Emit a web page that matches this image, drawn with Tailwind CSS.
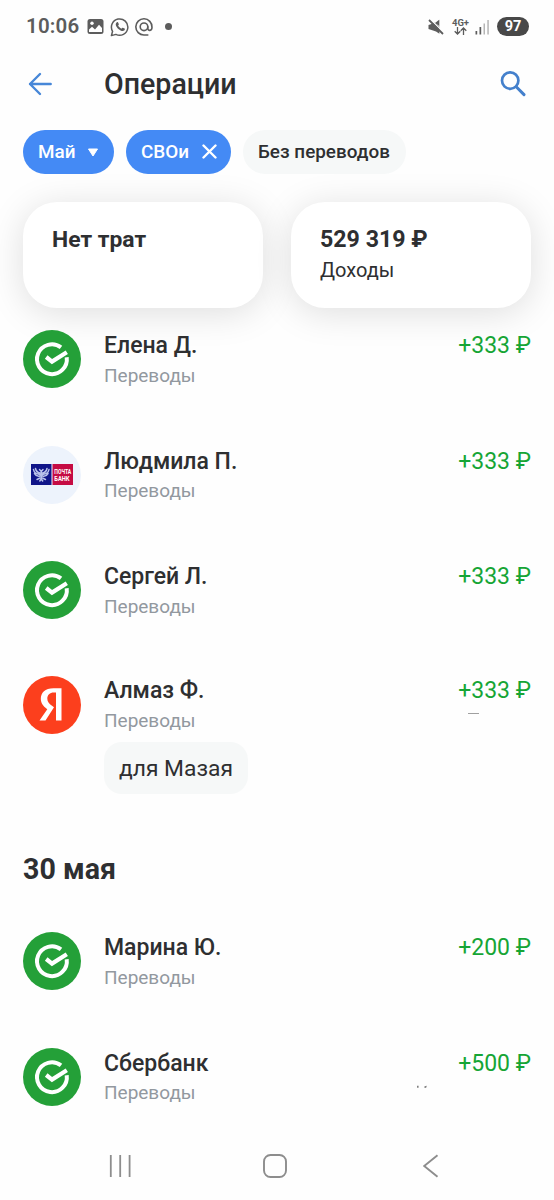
<!DOCTYPE html>
<html lang="ru">
<head>
<meta charset="utf-8">
<title>Операции</title>
<script src="https://cdn.jsdelivr.net/npm/@tailwindcss/browser@4"></script>
</head>
<body class="bg-white">
<svg class="hidden">
  <symbol id="sber" viewBox="0 0 58 58">
    <circle cx="29" cy="29" r="29" fill="#24a038"/>
    <path d="M38 17.400A14.900 14.900 0 1 0 43.700 27.200" fill="none" stroke="#fff" stroke-width="4"/>
    <path d="M23.200 27L29 31.600L43.800 22.200" fill="none" stroke="#fff" stroke-width="4.200"/>
  </symbol>
</svg>
<div class="flex h-[1200px] w-[554px] flex-col overflow-hidden bg-[#fefefe] text-[#2e2f31]" style="font-family:Roboto,'Noto Sans',sans-serif">

  <!-- Status bar -->
  <div class="flex h-[53px] shrink-0 items-center justify-between pl-[26px] pr-[25px] text-[#5c5c5c]">
    <div class="flex items-center">
      <span class="w-[61px] text-[20.5px] font-semibold leading-none whitespace-nowrap tracking-[0.2px]">10:06</span>
      <svg class="h-[17px] w-[17px]" viewBox="0 0 17 17"><rect x="0.500" y="1" width="16" height="15" rx="2.500" fill="#5c5c5c"/><circle cx="5" cy="5.300" r="1.700" fill="#fff"/><path d="M2 14V11.600L5 8.700L8 11.500L12 6.800L15 10V14Z" fill="#fff"/></svg>
      <svg class="ml-[6px] h-[20px] w-[20px]" viewBox="0 0 20 20"><path d="M1.400 18.600L2.600 14.300A8.200 8.200 0 1 1 5.900 17.400Z" fill="none" stroke="#5c5c5c" stroke-width="1.500" stroke-linejoin="round"/><path d="M6.600 5.400C7.300 4.800 7.900 5 8.100 5.500L8.800 7.100C9 7.600 8.500 8.100 8.100 8.600C8.800 10 9.900 11.100 11.400 11.700C11.900 11.200 12.300 10.500 12.800 10.700L14.600 11.600C15.100 11.900 14.900 13 14.200 13.500C12.800 14.600 10.400 13.700 8.400 11.900C6.300 9.900 4.700 7 6.600 5.400Z" fill="#5c5c5c"/></svg>
      <svg class="ml-[4px] h-[20px] w-[20px]" viewBox="0 0 20 20" fill="none" stroke="#5c5c5c" stroke-width="1.600"><circle cx="10" cy="9.800" r="3.800"/><path d="M13.800 9.800V11.200C13.800 14.300 18 14.200 18 10.200A8.100 8.100 0 1 0 10 18H13.800" stroke-linecap="round"/></svg>
      <span class="ml-[11px] h-[7px] w-[7px] rounded-full bg-[#5c5c5c]"></span>
    </div>
    <div class="flex items-center">
      <svg class="h-[16px] w-[16px]" viewBox="0 0 16 16"><path d="M0.500 6L3.500 5L8.500 2.800L11.400 0.800V14.800L8 12.500L3.500 11L0.500 10Z" fill="#5c5c5c"/><path d="M3.200 0L11.600 8.500V0Z" fill="#fefefe"/><path d="M7 4L11.200 0.800V7Z" fill="#5c5c5c"/><path d="M2.500 0.500L16 13.800" stroke="#fefefe" stroke-width="1.200"/><path d="M1 1L15 15" stroke="#5c5c5c" stroke-width="1.800"/></svg>
      <div class="ml-[7px] flex w-[19px] flex-col items-center">
        <span class="text-[9.5px] font-bold leading-[9px]">4G+</span>
        <svg class="h-[8px] w-[13px]" viewBox="0 0 13 8" fill="none" stroke="#5c5c5c" stroke-width="1.300"><path d="M3.500 0V7M0.700 4.300L3.500 7L6.300 4.300M9.500 8V1M6.700 3.700L9.500 1L12.300 3.700"/></svg>
      </div>
      <svg class="ml-[5px] h-[16px] w-[15px]" viewBox="0 0 15 16"><rect x="0.500" y="12" width="1.700" height="3.500" fill="#5c5c5c"/><rect x="4.500" y="8" width="1.700" height="7.500" fill="#5c5c5c"/><rect x="8.500" y="4.500" width="1.500" height="11" fill="#b5b5b5"/><rect x="12.300" y="1" width="1.500" height="14.500" fill="#b5b5b5"/></svg>
      <span class="ml-[7px] flex h-[19px] w-[32px] items-center justify-center rounded-full bg-[#484848] text-[14.5px] font-bold text-white">97</span>
    </div>
  </div>

  <!-- Title bar -->
  <div class="mt-px flex h-[60px] shrink-0 items-center pl-[28px] pr-[28px]">
    <svg class="h-[24px] w-[24px]" viewBox="0 0 24 24" fill="none" stroke="#4787d8" stroke-width="2.400" stroke-linecap="round" stroke-linejoin="round"><path d="M22.700 12H2M12 2L2 12L12 22"/></svg>
    <h1 class="-mt-px ml-[52px] grow text-[28.6px] font-medium leading-[34px]">Операции</h1>
    <svg class="h-[26px] w-[26px]" viewBox="0 0 26 26" fill="none" stroke="#4480cc"><circle cx="10.200" cy="9.600" r="8.200" stroke-width="2.700"/><path d="M16.200 15.800L24 23.600" stroke-width="3" stroke-linecap="round"/></svg>
  </div>

  <!-- Filters -->
  <div class="mt-[16px] flex h-[43.5px] shrink-0 gap-[12px] pl-[23px] text-[18.9px] font-medium">
    <div class="flex w-[91px] items-center rounded-full bg-[#448af5] pl-[15px] text-white"><span>Май</span>
      <svg class="ml-[11px] mt-[2px] h-[9px] w-[12px]" viewBox="0 0 12 9"><path d="M1.500 1H10.500L6 8Z" fill="#fff" stroke="#fff" stroke-linejoin="round"/></svg></div>
    <div class="flex w-[105px] items-center rounded-full bg-[#448af5] pl-[15px] text-white"><span>СВОи</span>
      <svg class="ml-[13px] h-[15px] w-[15px]" viewBox="0 0 15 15"><path d="M1.500 1.500L13.500 13.500M13.500 1.500L1.500 13.500" stroke="#fff" stroke-width="2.400" stroke-linecap="round"/></svg></div>
    <div class="flex w-[163px] items-center rounded-full bg-[#f6f8f8] pl-[15px] whitespace-nowrap"><span>Без переводов</span></div>
  </div>

  <!-- Totals -->
  <div class="mt-[28.5px] flex h-[105.5px] shrink-0 gap-[28px] pl-[23px]">
    <div class="w-[240px] rounded-[34px] bg-white pl-[29px] pt-[24px] shadow-[0_5px_36px_rgba(0,0,0,0.13)]">
      <div class="text-[22.9px] font-bold leading-[28px]">Нет трат</div>
    </div>
    <div class="w-[240px] rounded-[34px] bg-white pl-[29px] pt-[23px] shadow-[0_5px_36px_rgba(0,0,0,0.13)]">
      <div class="text-[23.2px] font-bold leading-[28px]">529 319 ₽</div>
      <div class="mt-[4px] text-[20px] leading-[26px]">Доходы</div>
    </div>
  </div>

  <!-- Operations -->
  <div class="mt-[22.5px] flex h-[115.5px] shrink-0 pl-[23px] pr-[23px]">
    <svg class="h-[58px] w-[58px]"><use href="#sber"/></svg>
    <div class="ml-[23px] mt-px grow">
      <div class="text-[23px] font-medium leading-[30px]">Елена Д.</div>
      <div class="mt-[2px] text-[19px] leading-[26px] text-[#92989f]">Переводы</div>
    </div>
    <div class="mt-px text-[23px] leading-[30px] text-[#16a535]">+333 ₽</div>
  </div>
  <div class="flex h-[115px] shrink-0 pl-[23px] pr-[23px]">
    <div class="flex h-[58px] w-[58px] items-center justify-center rounded-full bg-[#edf3fc]">
      <svg class="h-[21px] w-[42px]" viewBox="0 0 42 21">
        <rect width="20.500" height="21" fill="#101589"/><rect x="21.500" width="20.500" height="21" fill="#c50b43"/>
        <g fill="none" stroke="#b9c1ea" stroke-width="1.500" stroke-linecap="round"><path d="M2.500 5.500C3 8.500 5 10 9 10.500M4.500 4.500C5 7 6.500 8.500 9 9M3.500 9.500C5 12 7 12.500 9 12M18 5.500C17.500 8.500 15.500 10 11.500 10.500M16 4.500C15.500 7 14 8.500 11.500 9M17 9.500C15.500 12 13.500 12.500 11.500 12M8.500 5.500L9.800 7M12 5.500L10.700 7M10.250 7V15M9 14L6 15.500M11.500 14L14.500 15.500M8.800 17L10.250 15L11.700 17"/></g>
        <text x="23.300" y="9.500" font-size="6.300" font-weight="700" fill="#fff" textLength="17" lengthAdjust="spacingAndGlyphs">ПОЧТА</text>
        <text x="23.300" y="16.500" font-size="6.300" font-weight="700" fill="#fff" textLength="15.300" lengthAdjust="spacingAndGlyphs">БАНК</text>
      </svg>
    </div>
    <div class="ml-[23px] mt-px grow">
      <div class="text-[23px] font-medium leading-[30px]">Людмила П.</div>
      <div class="mt-px text-[19px] leading-[26px] text-[#92989f]">Переводы</div>
    </div>
    <div class="mt-px text-[23px] leading-[30px] text-[#16a535]">+333 ₽</div>
  </div>
  <div class="flex h-[115px] shrink-0 pl-[23px] pr-[23px]">
    <svg class="h-[58px] w-[58px]"><use href="#sber"/></svg>
    <div class="ml-[23px] mt-px grow">
      <div class="text-[23px] font-medium leading-[30px]">Сергей Л.</div>
      <div class="mt-[2px] text-[19px] leading-[26px] text-[#92989f]">Переводы</div>
    </div>
    <div class="mt-px text-[23px] leading-[30px] text-[#16a535]">+333 ₽</div>
  </div>
  <div class="flex h-[176px] shrink-0 pl-[23px] pr-[23px]">
    <svg class="h-[58px] w-[58px]" viewBox="0 0 58 58"><circle cx="29" cy="29" r="29" fill="#fc3f1d"/><path d="M38.500 44.500H33V16.500H30.800C26.800 16.500 24.300 19 24.300 22.600C24.300 26 26 27.700 29 29.800L31 31.200L22.500 44.500H16.500L24.300 33.200C20.200 30.300 17.800 27.300 17.800 22.800C17.800 16.800 22 12.200 30.500 12.200H38.500Z" fill="#fff"/></svg>
    <div class="ml-[23px] grow">
      <div class="text-[23px] font-medium leading-[30px]">Алмаз Ф.</div>
      <div class="mt-[2px] text-[19px] leading-[26px] text-[#92989f]">Переводы</div>
      <div class="mt-[8.5px] flex h-[52px] w-[144px] items-center rounded-[18px] bg-[#f6f8f8] pt-[2px] pl-[15px] text-[22.8px] whitespace-nowrap"><span>для Мазая</span></div>
    </div>
    <div class="text-[23px] leading-[30px] text-[#16a535]">+333 ₽
      <div class="ml-[10px] mt-[7px] h-px w-[11px] bg-[#a0a0a0]"></div>
    </div>
  </div>

  <h2 class="h-[80px] shrink-0 pl-[23px] text-[28.6px] font-bold leading-[34px]">30 мая</h2>

  <div class="flex h-[116px] shrink-0 pl-[23px] pr-[23px]">
    <svg class="h-[58px] w-[58px]"><use href="#sber"/></svg>
    <div class="ml-[23px] mt-px grow">
      <div class="text-[23px] font-medium leading-[30px]">Марина Ю.</div>
      <div class="mt-[2px] text-[19px] leading-[26px] text-[#92989f]">Переводы</div>
    </div>
    <div class="mt-px text-[23px] leading-[30px] text-[#16a535]">+200 ₽</div>
  </div>
  <div class="flex h-[84px] shrink-0 pl-[23px] pr-[23px]">
    <svg class="h-[58px] w-[58px]"><use href="#sber"/></svg>
    <div class="ml-[23px] mt-px grow">
      <div class="text-[23px] font-medium leading-[30px]">Сбербанк</div>
      <div class="mt-px text-[19px] leading-[26px] text-[#92989f]">Переводы</div>
    </div>
    <svg class="mt-[37px] mr-[30px] h-[4px] w-[12px]" viewBox="0 0 12 4"><path d="M1 .8h1.600v2H1zM8.500 1.300l2.300-.5-.6 1.900-1.700.2z" fill="#808080"/></svg>
    <div class="mt-px text-[23px] leading-[30px] text-[#16a535]">+500 ₽</div>
  </div>

  <!-- Navigation -->
  <div class="flex h-[68px] shrink-0 items-center pl-[109px]">
    <svg class="h-[24px] w-[22px]" viewBox="0 0 22 24"><path d="M1.800 1V23M11.200 1V23M20.600 1V23" stroke="#8d8d8d" stroke-width="1.800"/></svg>
    <svg class="ml-[132px] h-[24px] w-[24px]" viewBox="0 0 24 24"><rect x="1" y="1" width="22" height="22" rx="6.500" fill="none" stroke="#8d8d8d" stroke-width="1.900"/></svg>
    <svg class="ml-[136px] h-[24px] w-[16px]" viewBox="0 0 16 24"><path d="M14.500 1.200L1.200 12L14.500 22.800" fill="none" stroke="#8d8d8d" stroke-width="1.900"/></svg>
  </div>
</div>
</body>
</html>
